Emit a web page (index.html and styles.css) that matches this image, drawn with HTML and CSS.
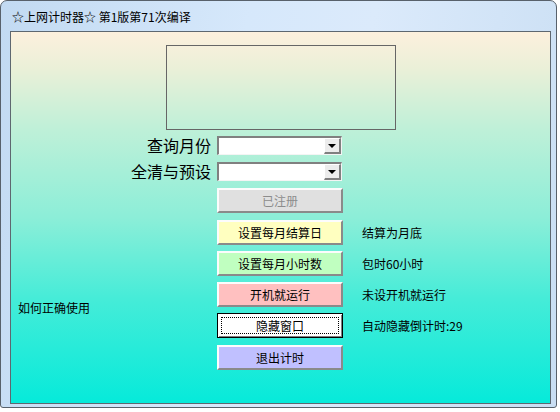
FILE: index.html
```html
<!DOCTYPE html>
<html>
<head>
<meta charset="utf-8">
<link rel="stylesheet" href="styles.css">
</head>
<body>
<div class="window">
  <div class="titlebar">☆上网计时器☆ 第1版第71次编译</div>
  <div class="client">
    <div class="picture"></div>
    <div class="grid">
      <div class="label r1">查询月份</div>
      <div class="combo r1"><span class="combo-btn"><span class="tri"></span></span></div>
      <div class="label r2">全清与预设</div>
      <div class="combo r2"><span class="combo-btn"><span class="tri"></span></span></div>
      <div class="btn disabled r3">已注册</div>
      <div class="btn yellow r4">设置每月结算日</div>
      <div class="note r4">结算为月底</div>
      <div class="btn green r5">设置每月小时数</div>
      <div class="note r5">包时60小时</div>
      <div class="help">如何正确使用</div>
      <div class="btn pink r6">开机就运行</div>
      <div class="note r6">未设开机就运行</div>
      <div class="btn focused r7"><span class="focus">隐藏窗口</span></div>
      <div class="note r7">自动隐藏倒计时:29</div>
      <div class="btn blue r8">退出计时</div>
    </div>
  </div>
</div>
</body>
</html>
```

FILE: styles.css
```css
* { box-sizing: border-box; }
html, body {
  margin: 0;
  padding: 0;
  background: #ffffff;
  font-family: "Noto Sans CJK SC", "Liberation Sans", sans-serif;
  color: #000;
}
.window {
  width: 557px;
  height: 408px;
  border: 1px solid #58616b;
  border-radius: 7px 7px 3px 3px;
  padding: 0 5px 3px 9px;
  background: linear-gradient(100deg, #c2daf2 0%, #d6e8fb 40%, #dbeafb 60%, #c9def3 100%);
  display: flex;
  flex-direction: column;
}
.titlebar {
  height: 30px;
  line-height: 30px;
  font-size: 12px;
  padding-left: 2px;
  padding-top: 1px;
  white-space: nowrap;
  color: #000;
}
.client {
  flex: 1;
  border: 1px solid #5e6770;
  background: linear-gradient(180deg, #fdf0dd 0%, #eaf0d8 10%, #bff0d8 26%, #8ceed8 50%, #45ecd8 72%, #06eada 100%);
  padding-top: 13px;
}
.picture {
  margin-left: 155px;
  width: 230px;
  height: 85px;
  border: 1px solid #666;
}
.grid {
  margin-top: 6px;
  display: grid;
  grid-template-columns: 199px 126px auto;
  grid-template-rows: 20px 20px 26px 25px 25px 25px 26px 25px;
  column-gap: 7px;
  row-gap: 6px;
}
.r1 { grid-row: 1; }
.r2 { grid-row: 2; }
.r3 { grid-row: 3; }
.r4 { grid-row: 4; }
.r5 { grid-row: 5; }
.r6 { grid-row: 6; }
.r7 { grid-row: 7; }
.r8 { grid-row: 8; }
.label {
  grid-column: 1;
  text-align: right;
  font-size: 16px;
  line-height: 19px;
  height: 19px;
  margin-right: -1px;
}
.combo {
  grid-column: 2;
  width: 125px;
  height: 19px;
  background: #fff;
  border-top: 2px solid #808080;
  border-left: 2px solid #808080;
  border-bottom: 1px solid #f4f4f4;
  border-right: 1px solid #f4f4f4;
  display: flex;
  justify-content: flex-end;
}
.combo-btn {
  width: 17px;
  height: 16px;
  background: #ececec;
  border-top: 1px solid #fff;
  border-left: 1px solid #fff;
  border-right: 2px solid #808080;
  border-bottom: 2px solid #808080;
  display: flex;
  align-items: center;
  justify-content: center;
}
.tri {
  width: 0;
  height: 0;
  border-left: 4px solid transparent;
  border-right: 4px solid transparent;
  border-top: 4px solid #000;
}
.btn {
  grid-column: 2;
  align-self: start;
  height: 25px;
  font-size: 12px;
  line-height: 21px;
  text-align: center;
  border-top: 2px solid #fcfcfc;
  border-left: 2px solid #fcfcfc;
  border-right: 2px solid #8a8a8a;
  border-bottom: 2px solid #8a8a8a;
}
.disabled { background: #e0e0e0; color: #8c8c8c; }
.yellow { background: #ffffc0; }
.green { background: #c0ffc0; }
.pink { background: #ffc0c0; }
.blue { background: #c0c0ff; }
.focused {
  background: #fff;
  border: 1px solid #000;
  box-shadow: inset 1px 1px 0 #fff, inset -1px -1px 0 #808080;
  padding: 3px;
  line-height: 17px;
}
.focus {
  display: block;
  height: 17px;
  border: 1px dotted #000;
  line-height: 15px;
}
.note {
  grid-column: 3;
  font-size: 12px;
  line-height: 25px;
  padding-left: 12px;
  white-space: nowrap;
}
.help {
  grid-column: 1;
  grid-row: 6 / 8;
  align-self: center;
  font-size: 12px;
  padding-left: 7px;
  margin-bottom: 6px;
  line-height: 16px;
}
```
